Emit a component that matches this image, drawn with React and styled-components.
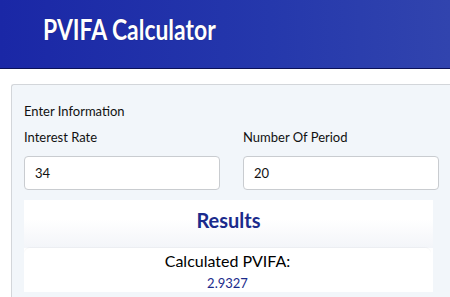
import React, { useState } from 'react'
import styled, { createGlobalStyle } from 'styled-components'

const GlobalStyle = createGlobalStyle`
	html, body {
		margin: 0;
		padding: 0;
		background: #ffffff;
		overflow: hidden;
	}

	body {
		font-family: Lato, 'Noto Sans', sans-serif;
		color: #111111;
	}
`

const pvifa = (rate, periods) => {
	const r = parseFloat(rate) / 100
	const n = parseFloat(periods)
	if (!r || !n) return ''
	return ((1 - Math.pow(1 + r, -n)) / r).toFixed(4)
}

const App = () => {
	const [rate, setRate] = useState('34')
	const [periods, setPeriods] = useState('20')

	return (
		<Page>
			<GlobalStyle />
			<Header>
				<Title>PVIFA Calculator</Title>
			</Header>
			<Main>
				<Card>
					<SectionLabel>Enter Information</SectionLabel>
					<Fields>
						<Field>
							<Label>Interest Rate</Label>
							<Input value={rate} onChange={(e) => setRate(e.target.value)} />
						</Field>
						<Field>
							<Label>Number Of Period</Label>
							<Input value={periods} onChange={(e) => setPeriods(e.target.value)} />
						</Field>
					</Fields>
					<Results>
						<ResultsTitle>Results</ResultsTitle>
						<ResultBody>
							<ResultLabel>Calculated PVIFA:</ResultLabel>
							<ResultValue>{pvifa(rate, periods)}</ResultValue>
						</ResultBody>
					</Results>
				</Card>
			</Main>
		</Page>
	)
}

export default App

const Page = styled.div`
	width: 450px;
	height: 297px;
	overflow: hidden;
`

const Header = styled.header`
	height: 68px;
	box-sizing: border-box;
	background: linear-gradient(90deg, #1a27a6 0%, #2538ac 60%, #3144ae 100%);
	border-bottom: 1px solid #0b1157;
	padding: 11px 0 0 43px;
	height: 69px;
`

// the original face is a condensed humanist sans; Lato is squeezed to match its width
const Title = styled.h1`
	margin: 0;
	color: #ffffff;
	font-family: Lato, sans-serif;
	font-weight: 700;
	font-size: 29px;
	line-height: 36px;
	transform: scaleX(0.79);
	transform-origin: left center;
	text-shadow: 0 0 1px rgba(0, 0, 0, 0.4);
`

const Main = styled.main`
	padding: 15px 0 0 11px;
`

const Card = styled.section`
	background: #f2f6fa;
	border: 1px solid #d3d6da;
	border-right: none;
	border-bottom: none;
	border-top-left-radius: 3px;
	padding: 18px 0 0 12px;
	width: 460px;
	height: 260px;
	box-sizing: border-box;
`

const SectionLabel = styled.div`
	font-size: 13px;
	line-height: 16px;
	margin-bottom: 10px;
`

const Fields = styled.div`
	display: grid;
	grid-template-columns: 196px 196px;
	column-gap: 23px;
`

const Field = styled.div`
	display: flex;
	flex-direction: column;
`

const Label = styled.label`
	font-size: 13px;
	line-height: 16px;
	margin-bottom: 11px;
`

const Input = styled.input`
	height: 34px;
	box-sizing: border-box;
	border: 1px solid #c9ccd0;
	border-radius: 4px;
	background: #ffffff;
	padding: 0 10px;
	font-family: Lato, sans-serif;
	font-size: 13px;
	color: #111111;
	outline: none;
`

const Results = styled.div`
	margin-top: 10px;
	width: 409px;
	background: #ffffff;
	display: flex;
	flex-direction: column;
`

const ResultsTitle = styled.h2`
	margin: 0;
	height: 48px;
	box-sizing: border-box;
	padding-top: 7px;
	text-align: center;
	line-height: 26px;
	font-size: 20px;
	font-weight: 700;
	color: #1b2b8c;
	background: linear-gradient(180deg, #ffffff 40%, #f3f5f9 100%);
`

const ResultBody = styled.div`
	background: #ffffff;
	border-top-left-radius: 6px;
	border-top-right-radius: 6px;
	box-shadow: 0 -1px 1px rgba(0, 0, 0, 0.03);
	margin-right: 2px;
	display: flex;
	flex-direction: column;
	align-items: center;
	padding-top: 3px;
`

const ResultLabel = styled.div`
	font-size: 16px;
	line-height: 20px;
	color: #000000;
`

const ResultValue = styled.div`
	font-size: 13px;
	line-height: 18px;
	color: #1b2b8c;
	margin-top: 3px;
`
